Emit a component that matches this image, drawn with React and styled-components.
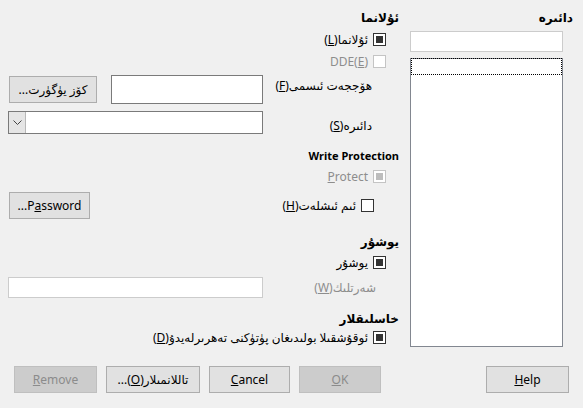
import React from 'react';
import styled, { createGlobalStyle } from 'styled-components';

const GlobalStyle = createGlobalStyle`
  html, body {
    margin: 0;
    padding: 0;
    background: #f0f0f0;
  }
  body {
    font-family: "Noto Sans", "DejaVu Sans", sans-serif;
    font-size: 12px;
    color: #000;
  }
`

const Dialog = styled.div`
  width: 583px;
  height: 408px;
  box-sizing: border-box;
  direction: rtl;
  padding: 10px 10px 0 8px;
  background: #f0f0f0;
  display: flex;
  flex-direction: column;
`

const Main = styled.div`
  display: flex;
  gap: 11px;
  height: 337px;
`

const RightColumn = styled.div`
  width: 163px;
  display: flex;
  flex-direction: column;
  align-items: flex-end;
`

const Middle = styled.div`
  width: 391px;
  display: flex;
  flex-direction: column;
`

const Heading = styled.div`
  font-weight: 700;
  font-size: ${p => (p.$latin ? 11 : 12)}px;
  line-height: 16px;
  height: 16px;
  white-space: nowrap;
  align-self: flex-start;
  margin-top: ${p => p.$top || 0}px;
`

const CheckRow = styled.div`
  display: flex;
  align-items: center;
  gap: 5px;
  height: ${p => p.$h || 22}px;
  margin-top: ${p => p.$top || 0}px;
  padding-right: ${p => (p.$indent === undefined ? 13 : p.$indent)}px;
  color: ${p => (p.$disabled ? '#8d8d8d' : '#000')};
  white-space: nowrap;
`

const Box = styled.span`
  flex: none;
  display: inline-block;
  width: 13px;
  height: 13px;
  box-sizing: border-box;
  padding: 2px;
  background: #fff;
  border: 1px solid ${p => (p.$disabled ? '#c4c4c4' : '#333')};
`

const Mark = styled.span`
  display: block;
  width: 7px;
  height: 7px;
  background: ${p => (p.$disabled ? '#bdbdbd' : '#333')};
`

const FieldRow = styled.div`
  display: grid;
  grid-template-columns: 136px 255px;
  align-items: center;
  height: ${p => p.$h}px;
  margin-top: ${p => p.$top || 0}px;
`

const Label = styled.div`
  padding-right: ${p => p.$pad || 27}px;
  color: ${p => (p.$disabled ? '#8d8d8d' : '#000')};
  white-space: nowrap;
  margin-top: ${p => p.$shift || 0}px;
`

const Controls = styled.div`
  display: flex;
  align-items: center;
  justify-content: ${p => (p.$end ? 'flex-end' : 'flex-start')};
  gap: 14px;
  padding-left: ${p => (p.$end ? 1 : 0)}px;
`

const TextBox = styled.div`
  width: ${p => p.$w}px;
  height: ${p => p.$h}px;
  box-sizing: border-box;
  background: #fff;
  border: 1px solid ${p => (p.$light ? '#cccccc' : '#7a7a7a')};
  margin-top: ${p => p.$top || 0}px;
`

const Combo = styled.div`
  width: 255px;
  height: 23px;
  box-sizing: border-box;
  display: flex;
  justify-content: flex-end;
  background: #fff;
  border: 1px solid #7a7a7a;
`

const ComboArrow = styled.div`
  width: 17px;
  height: 100%;
  box-sizing: border-box;
  display: flex;
  align-items: center;
  justify-content: center;
  background: #e5e5e5;
  border-right: 1px solid #b8b8b8;
`

const ListBox = styled.div`
  width: 153px;
  height: 289px;
  box-sizing: border-box;
  margin-top: 6px;
  background: #fff;
  border: 1px solid #828790;
`

const FocusRow = styled.div`
  height: 17px;
  box-sizing: border-box;
  margin-top: -1px;
  border: 1px dotted #000;
`

const Button = styled.button`
  width: ${p => p.$w}px;
  height: 27px;
  box-sizing: border-box;
  padding: 0;
  font-family: inherit;
  font-size: 12px;
  direction: rtl;
  color: ${p => (p.disabled ? '#8b8b8b' : '#000')};
  background: ${p => (p.disabled ? '#cccccc' : '#e1e1e1')};
  border: 1px solid ${p => (p.disabled ? '#bfbfbf' : '#adadad')};
  white-space: nowrap;
`

const Footer = styled.div`
  display: flex;
  align-items: center;
  margin-top: 19px;
  padding: 0 4px 0 6px;
`

const Spacer = styled.div`
  flex: 1;
`

const ButtonGroup = styled.div`
  display: flex;
  gap: 9px;
`

function Check({ checked, disabled }) {
  return (
    <Box $disabled={disabled}>
      {checked && <Mark $disabled={disabled} />}
    </Box>
  );
}

export default function App() {
  return (
    <>
      <GlobalStyle />
      <Dialog>
        <Main>
          <RightColumn>
            <Heading>دائىره</Heading>
            <TextBox $w={153} $h={21} $light $top={5} />
            <ListBox>
              <FocusRow />
            </ListBox>
          </RightColumn>

          <Middle>
            <Heading>ئۇلانما</Heading>
            <CheckRow $top={3}>
              <Check checked />
              <span>ئۇلانما(<u>L</u>)</span>
            </CheckRow>
            <CheckRow $disabled>
              <Check disabled />
              <span>DDE(<u>E</u>)</span>
            </CheckRow>

            <FieldRow $h={29} $top={3}>
              <Label $shift={-8}>ھۆججەت ئىسمى(<u>F</u>)</Label>
              <Controls>
                <TextBox $w={152} $h={29} />
                <Button $w={88}>كۆز يۈگۈرت...</Button>
              </Controls>
            </FieldRow>
            <FieldRow $h={23} $top={7}>
              <Label $shift={6}>دائىره(<u>S</u>)</Label>
              <Combo>
                <ComboArrow>
                  <svg width="9" height="5" viewBox="0 0 9 5">
                    <path d="M0.5 0.5 L4.5 4.5 L8.5 0.5" fill="none" stroke="#444" strokeWidth="1" />
                  </svg>
                </ComboArrow>
              </Combo>
            </FieldRow>

            <Heading $top={14} $latin>Write Protection</Heading>
            <CheckRow $top={2} $disabled>
              <Check checked disabled />
              <span><u>P</u>rotect</span>
            </CheckRow>
            <FieldRow $h={27} $top={4}>
              <CheckRow $h={27} $indent={25}>
                <Check />
                <span>ئىم ئىشلەت(<u>H</u>)</span>
              </CheckRow>
              <Controls $end>
                <Button $w={81}>P<u>a</u>ssword...</Button>
              </Controls>
            </FieldRow>

            <Heading $top={15}>يوشۇر</Heading>
            <CheckRow $top={2}>
              <Check checked />
              <span>يوشۇر</span>
            </CheckRow>
            <FieldRow $h={21} $top={4}>
              <Label $pad={23} $disabled>شەرتلىك(<u>W</u>)</Label>
              <TextBox $w={255} $h={21} $light />
            </FieldRow>

            <Heading $top={13}>خاسلىقلار</Heading>
            <CheckRow $h={20}>
              <Check checked />
              <span>ئوقۇشقىلا بولىدىغان پۈتۈكنى تەھرىرلەيدۇ(<u>D</u>)</span>
            </CheckRow>
          </Middle>
        </Main>

        <Footer>
          <Button $w={83}><u>H</u>elp</Button>
          <Spacer />
          <ButtonGroup>
            <Button $w={82} disabled><u>O</u>K</Button>
            <Button $w={81}><u>C</u>ancel</Button>
            <Button $w={94}>تاللانمىلار(<u>O</u>)...</Button>
            <Button $w={83} disabled><u>R</u>emove</Button>
          </ButtonGroup>
        </Footer>
      </Dialog>
    </>
  );
}
